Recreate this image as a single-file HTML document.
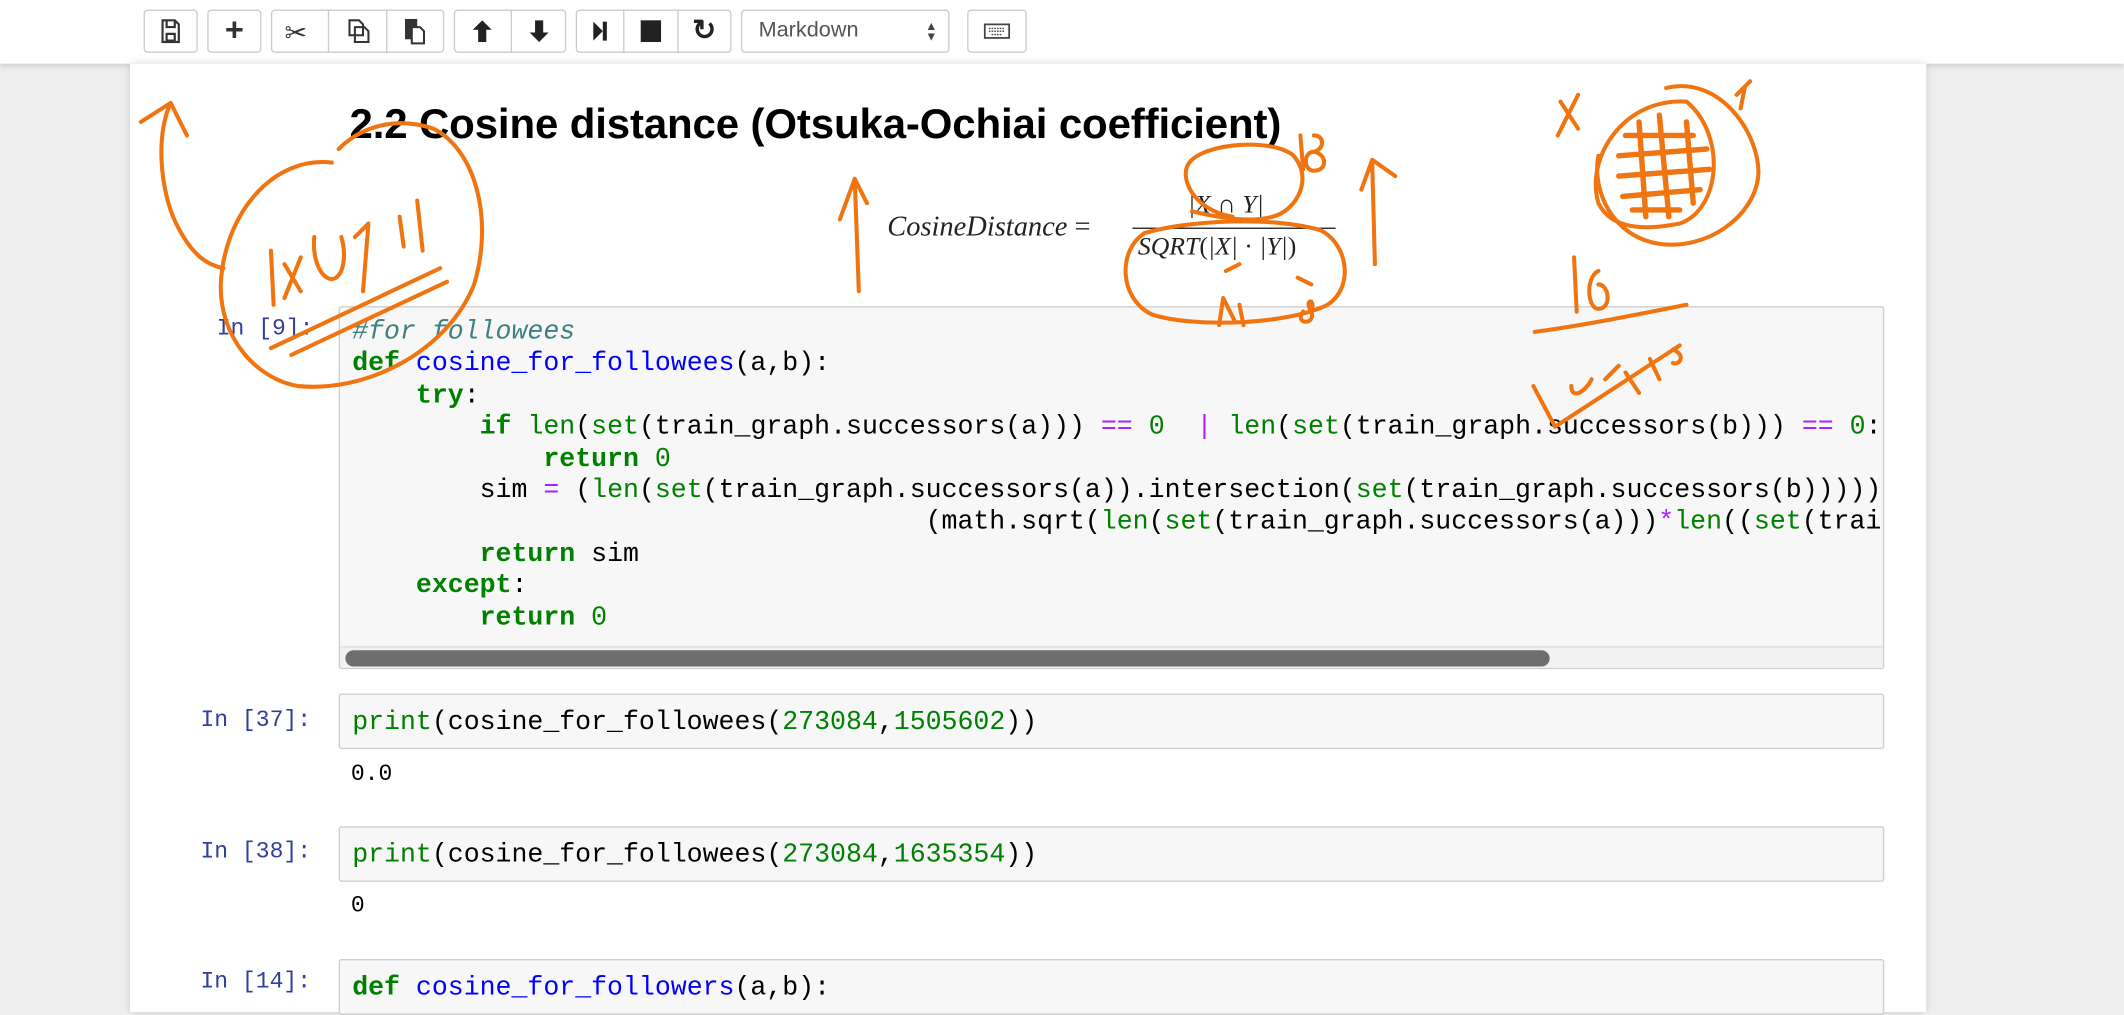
<!DOCTYPE html>
<html><head><meta charset="utf-8"><style>
html,body{margin:0;padding:0;width:2124px;height:984px;overflow:hidden;background:#eeeeee}
#s{position:absolute;left:0;top:0;width:1568px;height:726px;transform:scale(1.35459);transform-origin:0 0;font-family:"Liberation Sans",sans-serif}
.tb{position:absolute;left:0;top:0;width:1568px;height:47px;background:#fff;box-shadow:0 2px 4px rgba(0,0,0,.12)}
.btn{position:absolute;top:7px;height:32px;border:1px solid #ccc;border-radius:3px;background:#fff;box-sizing:border-box;display:flex;align-items:center;justify-content:center;font-size:17px;color:#333}
.sep{position:absolute;top:7px;width:1px;height:32px;background:#ccc}
.panel{position:absolute;left:96px;top:47px;width:1326px;height:700px;background:#fff;box-shadow:0 0 6px rgba(0,0,0,.15)}
h2{position:absolute;left:258px;top:74px;margin:0;font-size:31px;font-weight:bold;color:#000;white-space:nowrap;letter-spacing:-0.1px}
.f{position:absolute;font-family:"Liberation Serif",serif;font-style:italic;color:#222;white-space:nowrap}
.cell{position:absolute;left:250px;width:1141px;background:#f7f7f7;border:1px solid #cfcfcf;border-radius:2px;box-sizing:border-box;overflow:hidden}
.code{position:absolute;left:9px;font-family:"Liberation Mono",monospace;font-size:19.6px;line-height:23.4px;white-space:pre;color:#000}
.pr{position:absolute;font-family:"Liberation Mono",monospace;font-size:17px;color:#303f9f;white-space:pre}
.out{position:absolute;left:259px;font-family:"Liberation Mono",monospace;font-size:17px;white-space:pre;color:#000}
.k{color:#008000;font-weight:bold}.b{color:#008000}.fn{color:#0000ff}.c{color:#408080;font-style:italic}.n{color:#008000}.o{color:#aa22ff}
</style></head><body><div id="s">
<div class="tb">
<div class="btn" style="left:106px;width:40px"><svg width="16" height="18" viewBox="0 0 16 18"><path d="M2 1h9l3 3v13H2z M5 1v5h6V1 M5 11h6v5H5z" fill="none" stroke="#333" stroke-width="1.6"/></svg></div>
<div class="btn" style="left:153px;width:40px;font-weight:bold;font-size:24px">+</div>
<div class="btn" style="left:200px;width:128px"></div>
<div class="sep" style="left:242px"></div><div class="sep" style="left:285px"></div>
<div style="position:absolute;left:210px;top:12px;font-size:20px;color:#333">✂</div>
<svg style="position:absolute;left:255px;top:13px" width="18" height="20" viewBox="0 0 18 20"><path d="M3 2h7l3 3v8H3z M7 7h7l3 3v8H7z" fill="#fff" stroke="#333" stroke-width="1.5"/></svg>
<svg style="position:absolute;left:297px;top:12px" width="18" height="22" viewBox="0 0 18 22"><rect x="2" y="2" width="9" height="15" fill="#333"/><path d="M7 8h6l3 3v9H7z" fill="#fff" stroke="#333" stroke-width="1.5"/></svg>
<div class="btn" style="left:335px;width:83px"></div><div class="sep" style="left:377px"></div>
<svg style="position:absolute;left:348px;top:13px" width="16" height="20" viewBox="0 0 16 20"><path d="M8 2L1 9h4v9h6V9h4z" fill="#222"/></svg>
<svg style="position:absolute;left:390px;top:13px" width="16" height="20" viewBox="0 0 16 20"><path d="M8 18L1 11h4V2h6v9h4z" fill="#222"/></svg>
<div class="btn" style="left:425px;width:115px"></div><div class="sep" style="left:460px"></div><div class="sep" style="left:500px"></div>
<svg style="position:absolute;left:436px;top:15px" width="14" height="16" viewBox="0 0 14 16"><path d="M2 1l7 7-7 7z" fill="#222"/><rect x="9" y="1" width="3" height="14" fill="#222"/></svg>
<div style="position:absolute;left:473px;top:15px;width:15px;height:16px;background:#222"></div>
<div style="position:absolute;left:511px;top:10px;font-size:21px;font-weight:bold;color:#222">↻</div>
<div class="btn" style="left:547px;width:154px;justify-content:flex-start;padding-left:12px;font-size:16px;color:#555">Markdown<span style="position:absolute;right:8px;font-size:9px;line-height:8px;color:#444">▲<br>▼</span></div>
<div class="btn" style="left:714px;width:44px"><svg width="20" height="12" viewBox="0 0 20 12"><rect x="1" y="1" width="18" height="10" fill="none" stroke="#444" stroke-width="1.3"/><path d="M4 4h12M4 6h12M6 8.5h8" stroke="#444" stroke-width="1" stroke-dasharray="1.2 .8"/></svg></div>
</div>
<div class="panel"></div>
<h2>2.2 Cosine distance (Otsuka-Ochiai coefficient)</h2>
<div class="f" style="left:655px;top:155px;font-size:21px">CosineDistance <span style="font-style:normal">=</span></div>
<div class="f" style="left:877px;top:141px;font-size:19px">|X <span style="font-style:normal">∩</span> Y|</div>
<div style="position:absolute;left:836px;top:168px;width:150px;height:1px;background:#222"></div>
<div class="f" style="left:840px;top:172px;font-size:19px">SQRT<span style="font-style:normal">(</span>|X| <span style="font-style:normal">·</span> |Y|<span style="font-style:normal">)</span></div>

<div class="pr" style="left:160px;top:234px">In [9]:</div>
<div class="cell" style="top:226px;height:268px">
<div class="code" style="top:7px"><span class="c">#for followees</span>
<span class="k">def</span> <span class="fn">cosine_for_followees</span>(a,b):
    <span class="k">try</span>:
        <span class="k">if</span> <span class="b">len</span>(<span class="b">set</span>(train_graph.successors(a))) <span class="o">==</span> <span class="n">0</span>  <span class="o">|</span> <span class="b">len</span>(<span class="b">set</span>(train_graph.successors(b))) <span class="o">==</span> <span class="n">0</span>:
            <span class="k">return</span> <span class="n">0</span>
        sim <span class="o">=</span> (<span class="b">len</span>(<span class="b">set</span>(train_graph.successors(a)).intersection(<span class="b">set</span>(train_graph.successors(b))))) <span class="o">/</span>
                                    (math.sqrt(<span class="b">len</span>(<span class="b">set</span>(train_graph.successors(a)))<span class="o">*</span><span class="b">len</span>((<span class="b">set</span>(train_graph.successors(b))))))
        <span class="k">return</span> sim
    <span class="k">except</span>:
        <span class="k">return</span> <span class="n">0</span></div>
<div style="position:absolute;left:0;top:250px;width:1141px;height:17px;background:#f1f1f1;border-top:1px solid #e0e0e0"></div>
<div style="position:absolute;left:4px;top:253px;width:889px;height:12px;border-radius:6px;background:#6e6e6e"></div>
</div>

<div class="pr" style="left:148px;top:523px">In [37]:</div>
<div class="cell" style="top:512px;height:41px"><div class="code" style="top:9px"><span class="b">print</span>(cosine_for_followees(<span class="n">273084</span>,<span class="n">1505602</span>))</div></div>
<div class="out" style="top:563px">0.0</div>
<div class="pr" style="left:148px;top:620px">In [38]:</div>
<div class="cell" style="top:610px;height:41px"><div class="code" style="top:9px"><span class="b">print</span>(cosine_for_followees(<span class="n">273084</span>,<span class="n">1635354</span>))</div></div>
<div class="out" style="top:660px">0</div>
<div class="pr" style="left:148px;top:716px">In [14]:</div>
<div class="cell" style="top:708px;height:41px"><div class="code" style="top:9px"><span class="k">def</span> <span class="fn">cosine_for_followers</span>(a,b):</div></div>

<svg style="position:absolute;left:0;top:0" width="1568" height="726" viewBox="0 0 1568 726" fill="none" stroke="#f07410" stroke-width="3" stroke-linecap="round" stroke-linejoin="round">
<path d="M104 90L126 76L138 100 M126 76C115 100 118 140 130 165C140 185 150 195 165 198"/>
<path d="M245 120C200 115 165 160 163 210C162 250 190 280 220 285C270 290 330 260 350 210C365 160 350 110 320 95C290 85 265 95 250 110"/>
<path d="M200 185L202 225 M210 195L222 215 M222 190L210 220 M232 175C230 195 240 210 248 205C255 200 255 185 252 175 M262 175L272 165L268 215 M295 160L298 182 M308 148L312 185"/>
<path d="M200 257L325 198 M215 262L330 208"/>
<path d="M634 215L631 132 M620 162L631 132L640 150"/>
<path d="M910 160C880 155 870 130 878 120C890 105 940 102 955 115C968 130 960 150 945 158C930 165 905 162 880 156"/>
<path d="M960 100L962 125 M970 100C978 100 978 110 970 112C980 114 980 126 970 126C962 126 962 112 970 112"/>
<path d="M845 172C825 185 826 220 850 232C880 242 950 240 980 225C1000 212 995 180 975 170C940 160 880 162 845 172"/>
<path d="M905 200L915 195 M958 205L968 210 M900 240L903 220L912 238 M915 225L918 240 M962 230C955 240 972 240 968 230C962 220 972 220 968 230"/>
<path d="M1015 195L1013 120 M1005 140L1013 118L1030 130"/>
<path d="M1152 75L1165 95 M1165 70L1150 100 M1282 70L1292 60 M1288 65L1285 80"/>
<path d="M1245 75C1200 72 1170 115 1180 150C1190 170 1215 170 1240 165C1270 155 1275 100 1245 75Z"/>
<path d="M1230 65C1270 55 1300 100 1298 130C1295 160 1260 185 1225 180C1190 175 1175 140 1180 115"/>
<path d="M1200 100L1250 100 M1195 115L1260 110 M1195 130L1262 125 M1198 145L1255 140 M1205 155L1240 155 M1210 90L1215 160 M1225 85L1232 160 M1245 90L1250 150" stroke-width="4"/>
<path d="M1162 190L1164 230 M1180 200C1170 205 1172 228 1180 228C1190 228 1188 210 1180 210"/>
<path d="M1133 245C1170 240 1210 232 1245 225"/>
<path d="M1132 285L1148 315L1240 255 M1160 285C1160 295 1170 290 1175 280 M1185 280L1195 270 M1200 275L1210 290 M1218 265L1225 280 M1235 258C1245 262 1240 270 1235 268"/>
</svg>
</div></body></html>
